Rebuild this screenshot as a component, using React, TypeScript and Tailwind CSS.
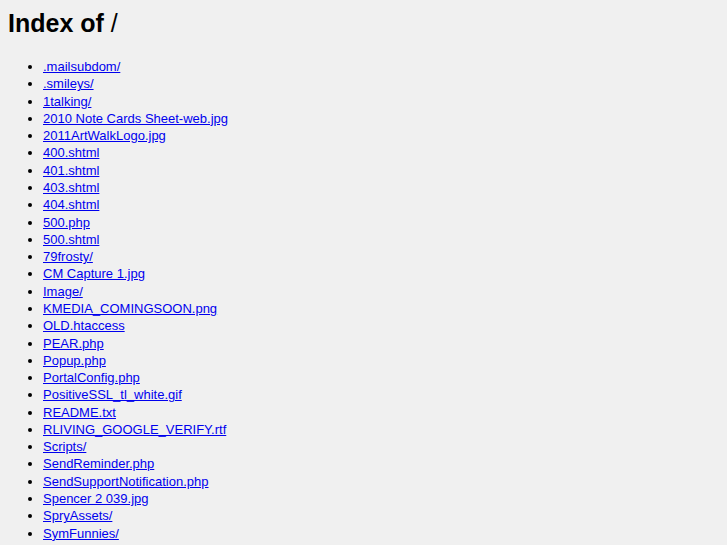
const files = [
  '.mailsubdom/',
  '.smileys/',
  '1talking/',
  '2010 Note Cards Sheet-web.jpg',
  '2011ArtWalkLogo.jpg',
  '400.shtml',
  '401.shtml',
  '403.shtml',
  '404.shtml',
  '500.php',
  '500.shtml',
  '79frosty/',
  'CM Capture 1.jpg',
  'Image/',
  'KMEDIA_COMINGSOON.png',
  'OLD.htaccess',
  'PEAR.php',
  'Popup.php',
  'PortalConfig.php',
  'PositiveSSL_tl_white.gif',
  'README.txt',
  'RLIVING_GOOGLE_VERIFY.rtf',
  'Scripts/',
  'SendReminder.php',
  'SendSupportNotification.php',
  'Spencer 2 039.jpg',
  'SpryAssets/',
  'SymFunnies/',
];

export default function App() {
  return (
    <div className="min-h-screen bg-[#f0f0f0] px-2 pt-[9px] text-black font-['Liberation_Sans',Arial,sans-serif]">
      <h1 className="text-[25px] font-bold leading-[29px]">
        Index of <span className="font-normal">/</span>
      </h1>
      <ul className="mt-[20px] list-disc pl-[35px] text-[13px] leading-[17.28px]">
        {files.map((f) => (
          <li key={f}>
            <a href={'/' + f} className="text-[#0000ee] underline">
              {f}
            </a>
          </li>
        ))}
      </ul>
    </div>
  );
}
